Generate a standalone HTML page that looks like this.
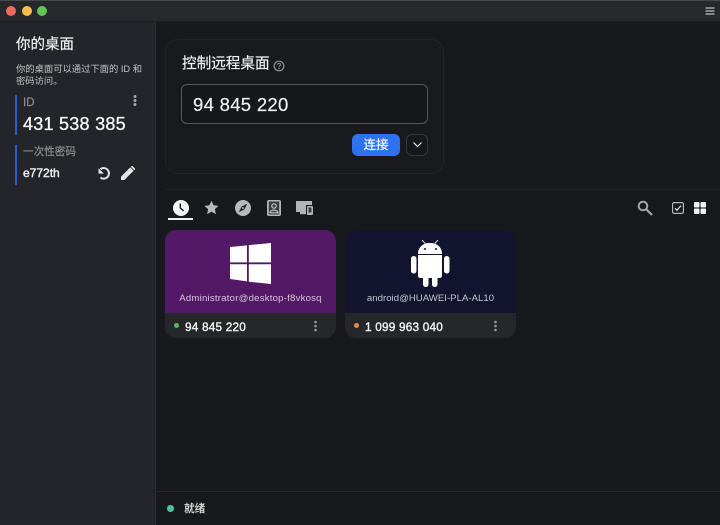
<!DOCTYPE html>
<html><head><meta charset="utf-8">
<style>
*{box-sizing:border-box;margin:0;padding:0}
html,body{width:720px;height:525px;overflow:hidden;background:#18191d}
body{position:relative;font-family:"Liberation Sans","Noto Sans CJK SC",sans-serif;color:#fff}
.a{position:absolute;white-space:nowrap}
.s{-webkit-text-stroke:.18px currentColor}
.m{-webkit-text-stroke:.4px currentColor}
svg{position:absolute;display:block}
</style></head><body>
<div class="a" style="left:0;top:0;width:720px;height:22px;background:#27282c;border-top:1px solid #47484c;border-bottom:1px solid #1d1e21"></div>
<div class="a" style="left:6px;top:6px;width:10px;height:10px;border-radius:50%;background:#ec6a5e"></div>
<div class="a" style="left:22px;top:6px;width:10px;height:10px;border-radius:50%;background:#f4bf4f"></div>
<div class="a" style="left:37px;top:6px;width:10px;height:10px;border-radius:50%;background:#61c554"></div>
<svg style="left:705px;top:7px" width="10" height="8"><path d="M.5 1H9.500M.5 4H9.500M.5 7H9.500" stroke="#c0c0c0" stroke-width="1.300"/></svg>

<div class="a" style="left:0;top:22px;width:156px;height:503px;background:#24252a;border-right:1px solid #2c2d31"></div>
<div class="a s" style="left:16px;top:35px;font-size:14.500px;line-height:20px;color:#f2f2f2">你的桌面</div>
<div class="a" style="left:16px;top:62.500px;font-size:9.300px;line-height:12.500px;color:#c4c4c6">你的桌面可以通过下面的 ID 和<br>密码访问。</div>
<div class="a" style="left:15px;top:95px;width:2px;height:40px;background:#2a5fd6"></div>
<div class="a s" style="left:23px;top:95.500px;font-size:11.500px;line-height:14px;color:#8f8f93">ID</div>
<svg style="left:132px;top:94px" width="6" height="13"><g fill="#a8a8aa"><circle cx="3" cy="2.500" r="1.500"/><circle cx="3" cy="6.500" r="1.500"/><circle cx="3" cy="10.500" r="1.500"/></g></svg>
<div class="a" style="left:23px;top:113px;font-size:18px;line-height:22px;letter-spacing:.25px;color:#f7f7f7;-webkit-text-stroke:.3px #f7f7f7">431 538 385</div>
<div class="a" style="left:15px;top:145px;width:2px;height:40px;background:#2a5fd6"></div>
<div class="a s" style="left:23px;top:144.500px;font-size:10.600px;line-height:15px;color:#8f8f93">一次性密码</div>
<div class="a m" style="left:23px;top:166px;font-size:12px;line-height:15px;color:#f0f0f0">e772th</div>
<svg style="left:97px;top:166px" width="15" height="15" viewBox="0 0 15 15"><path d="M3.400 3.200A5.300 5.300 0 1 1 3.400 11.500" fill="none" stroke="#e4e4e4" stroke-width="2"/><path d="M1.500 2.200V7.600H6.900Z" fill="#e4e4e4"/></svg>
<svg style="left:120px;top:165px" width="16" height="16" viewBox="0 0 16 16"><path d="M1 15V11.600L10.200 2.400L13.600 5.800L4.400 15ZM11.300 1.300Q12 .6 12.700 1.300L14.700 3.300Q15.400 4 14.700 4.700L14.200 5.200L10.800 1.800Z" fill="#e4e4e4"/></svg>

<div class="a" style="left:165px;top:39px;width:279px;height:135px;border:1px solid #232428;border-radius:13px;background:#191a1e"></div>
<div class="a s" style="left:182px;top:55px;font-size:14.600px;line-height:18px;color:#f0f0f0">控制远程桌面</div>
<svg style="left:273px;top:60px" width="12" height="12" viewBox="0 0 12 12"><circle cx="6" cy="6" r="4.800" fill="none" stroke="#909094" stroke-width="1.200"/><path d="M4.500 4.800C4.500 3 7.500 3 7.500 4.700C7.500 5.800 6 5.800 6 7.200" fill="none" stroke="#909094"/><circle cx="6" cy="8.600" r=".7" fill="#909094"/></svg>
<div class="a" style="left:181px;top:84px;width:247px;height:40px;border:1px solid #56575b;border-radius:6px;background:#17181b"></div>
<div class="a s" style="left:193px;top:94px;font-size:18.500px;line-height:21px;letter-spacing:.3px;color:#f2f2f2">94 845 220</div>
<div class="a s" style="left:352px;top:134px;width:48px;height:22px;border-radius:6px;background:#2e72f0;text-align:center;font-size:12.500px;line-height:22px;color:#fff">连接</div>
<div class="a" style="left:406px;top:134px;width:22px;height:22px;border-radius:6px;border:1px solid #36373b;background:#17181b"></div>
<svg style="left:412px;top:141px" width="11" height="8"><path d="M1.500 1.500L5.500 5.500L9.500 1.500" fill="none" stroke="#e8e8e8" stroke-width="1.200"/></svg>
<div class="a" style="left:165px;top:189px;width:555px;height:1px;background:#202125"></div>

<svg style="left:173px;top:200px" width="16" height="16" viewBox="0 0 16 16"><circle cx="8" cy="8" r="8" fill="#f5f5f5"/><path d="M7.300 3.500V8L10.700 11" fill="none" stroke="#1a1b1e" stroke-width="1.400"/></svg>
<div class="a" style="left:168px;top:218px;width:25px;height:2px;background:#f0f0f0"></div>
<svg style="left:204px;top:200px" width="15" height="15" viewBox="0 0 17 16"><path d="M8.500 .3L10.900 5.500L16.500 6.100L12.300 9.900L13.500 15.500L8.500 12.700L3.500 15.500L4.700 9.900L.5 6.100L6.100 5.500Z" fill="#b9b9bb"/></svg>
<svg style="left:235px;top:200px" width="16" height="16" viewBox="0 0 17 17"><circle cx="8.500" cy="8.500" r="8.500" fill="#b9b9bb"/><path d="M13 4L10 10L4 13L7 7Z" fill="#1f2023"/><circle cx="8.500" cy="8.500" r="1" fill="#b9b9bb"/></svg>
<svg style="left:267px;top:200px" width="14" height="16" viewBox="0 0 14 16"><rect width="14" height="16" rx="2" fill="#b4b4b6"/><rect x="1.800" y="1.500" width="10.400" height="13" fill="#3a3b3e"/><circle cx="7" cy="6" r="2.200" fill="none" stroke="#c4c4c6" stroke-width="1.200"/><path d="M3 12.800C3 9.300 11 9.300 11 12.800Z" fill="none" stroke="#c4c4c6" stroke-width="1.200"/></svg>
<svg style="left:296px;top:201px" width="17" height="14" viewBox="0 0 17 14"><path d="M0 0H16V4H10V11H0Z" fill="#b4b4b6"/><rect x="4" y="11" width="6" height="2.200" fill="#b4b4b6"/><rect x="11" y="5" width="6" height="9" rx="1" fill="#b4b4b6"/><rect x="12.500" y="6.500" width="3" height="5" fill="#3a3b3e"/></svg>

<svg style="left:637px;top:200px" width="16" height="16" viewBox="0 0 16 16"><circle cx="6" cy="6" r="4.300" fill="none" stroke="#a4a4a6" stroke-width="2"/><path d="M9.200 9.200L15 15" stroke="#a4a4a6" stroke-width="2.200"/></svg>
<svg style="left:672px;top:202px" width="12" height="12" viewBox="0 0 12 12"><rect x=".6" y=".6" width="10.800" height="10.800" rx="1.500" fill="none" stroke="#b4b4b6" stroke-width="1.200"/><path d="M3 6.300L5 8.300L9 3.600" fill="none" stroke="#e8e8e8" stroke-width="1.200"/></svg>
<svg style="left:694px;top:202px" width="12" height="12"><g fill="#f2f2f2"><rect width="5.500" height="5.500" rx="1"/><rect x="6.500" width="5.500" height="5.500" rx="1"/><rect y="6.500" width="5.500" height="5.500" rx="1"/><rect x="6.500" y="6.500" width="5.500" height="5.500" rx="1"/></g></svg>

<div class="a" style="left:165px;top:230px;width:171px;height:108px;border-radius:11px;background:#26272b;overflow:hidden"><div style="height:83px;background:#531966"></div></div>
<svg style="left:230px;top:243px" width="41" height="41" viewBox="0 0 41 41"><path d="M0 4L17 2.400V19.400H0ZM18.800 2.100L41 0V19.400H18.800ZM0 21.300H17V38.400L0 36ZM18.800 21.300H41V41L18.800 38.700Z" fill="#fff"/></svg>
<div class="a" style="left:165px;top:292.500px;width:171px;text-align:center;font-size:9.600px;line-height:12px;letter-spacing:.22px;color:#d8c6dd">Administrator@desktop-f8vkosq</div>
<div class="a" style="left:174px;top:323px;width:5px;height:5px;border-radius:50%;background:#5cb85c"></div>
<div class="a m" style="left:185px;top:320px;font-size:11.800px;line-height:14px;letter-spacing:.2px;color:#f0f0f0">94 845 220</div>
<svg style="left:313px;top:320px" width="5" height="12"><g fill="#9a9a9c"><circle cx="2.500" cy="2" r="1.300"/><circle cx="2.500" cy="6" r="1.300"/><circle cx="2.500" cy="10" r="1.300"/></g></svg>

<div class="a" style="left:345px;top:230px;width:171px;height:108px;border-radius:11px;background:#26272b;overflow:hidden"><div style="height:83px;background:#131430"></div></div>
<svg style="left:410px;top:240px" width="40" height="48" viewBox="0 0 40 48" fill="#fff"><path d="M16 4.500L12 0M24 4.500L28 0" stroke="#fff" stroke-width=".9"/><path d="M8 14C8 7 13 3 20 3S32 7 32 14Z"/><path d="M8 15H32V35.500Q32 38 29.500 38H10.500Q8 38 8 35.500Z"/><rect x="1" y="16" width="5.500" height="17.500" rx="2.750"/><rect x="34" y="16" width="5.500" height="17.500" rx="2.750"/><rect x="13" y="34" width="5.500" height="13" rx="2.750"/><rect x="22" y="34" width="5.500" height="13" rx="2.750"/><circle cx="15" cy="9" r="1" fill="#131430"/><circle cx="26" cy="9" r="1" fill="#131430"/></svg>
<div class="a" style="left:345px;top:292.500px;width:171px;text-align:center;font-size:9.600px;line-height:12px;letter-spacing:.02px;color:#c4c4cc">android@HUAWEI-PLA-AL10</div>
<div class="a" style="left:354px;top:323px;width:5px;height:5px;border-radius:50%;background:#e8894a"></div>
<div class="a m" style="left:365px;top:320px;font-size:11.800px;line-height:14px;letter-spacing:.2px;color:#f0f0f0">1 099 963 040</div>
<svg style="left:493px;top:320px" width="5" height="12"><g fill="#9a9a9c"><circle cx="2.500" cy="2" r="1.300"/><circle cx="2.500" cy="6" r="1.300"/><circle cx="2.500" cy="10" r="1.300"/></g></svg>

<div class="a" style="left:156px;top:491px;width:564px;height:1px;background:#26272b"></div>
<div class="a" style="left:167px;top:505px;width:6.500px;height:6.500px;border-radius:50%;background:#4fbf9f"></div>
<div class="a s" style="left:184px;top:502px;font-size:10.600px;line-height:15px;color:#e4e4e4">就绪</div>
</body></html>
